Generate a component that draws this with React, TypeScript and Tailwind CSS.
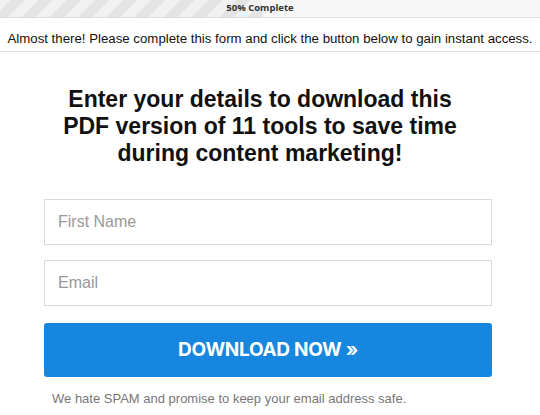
export default function App() {
  return (
    <div className="w-[540px] h-[415px] bg-white overflow-hidden" style={{ fontFamily: '"Liberation Sans", Arial, sans-serif' }}>
      {/* progress bar */}
      <div className="relative h-[18px] border-b border-[#dcdcdc] bg-[#f7f7f7]">
        <div className="h-full w-[262px] bg-[repeating-linear-gradient(-45deg,#e4e4e4_0px,#e4e4e4_10px,#f1f1f1_10px,#f1f1f1_20px)]" />
        <div className="absolute inset-0 pr-[20px] flex items-center justify-center text-[9.5px] font-bold text-[#333]" style={{ fontFamily: '"Open Sans", sans-serif' }}>
          50% Complete
        </div>
      </div>

      <div className="h-[34px] pt-[8px] flex items-center justify-center border-b border-[#dcdcdc] text-[13.25px] text-[#111]">
        Almost there! Please complete this form and click the button below to gain instant access.
      </div>

      <h1 className="mt-[34px] ml-[54px] w-[412px] text-center text-[23px] leading-[27px] font-bold text-[#111]">
        Enter your details to download this PDF version of 11 tools to save time during content marketing!
      </h1>

      <div className="ml-[44px] mr-[48px] mt-[32px] flex flex-col">
        <div className="h-[46px] border border-[#d3d9e0] flex items-center px-[13px] text-[16px] text-[#999]">
          First Name
        </div>
        <div className="mt-[15px] h-[46px] border border-[#d3d9e0] flex items-center px-[13px] text-[16px] text-[#999]">
          Email
        </div>
        <button className="mt-[17px] h-[54px] rounded-[3px] bg-[#1786de] text-white text-[19px] font-bold tracking-[-0.3px]" style={{ fontFamily: 'Inter, sans-serif' }}>
          DOWNLOAD NOW »
        </button>
        <p className="mt-[12px] pl-[8px] text-[13px] text-[#777]">
          We hate SPAM and promise to keep your email address safe.
        </p>
      </div>
    </div>
  )
}
